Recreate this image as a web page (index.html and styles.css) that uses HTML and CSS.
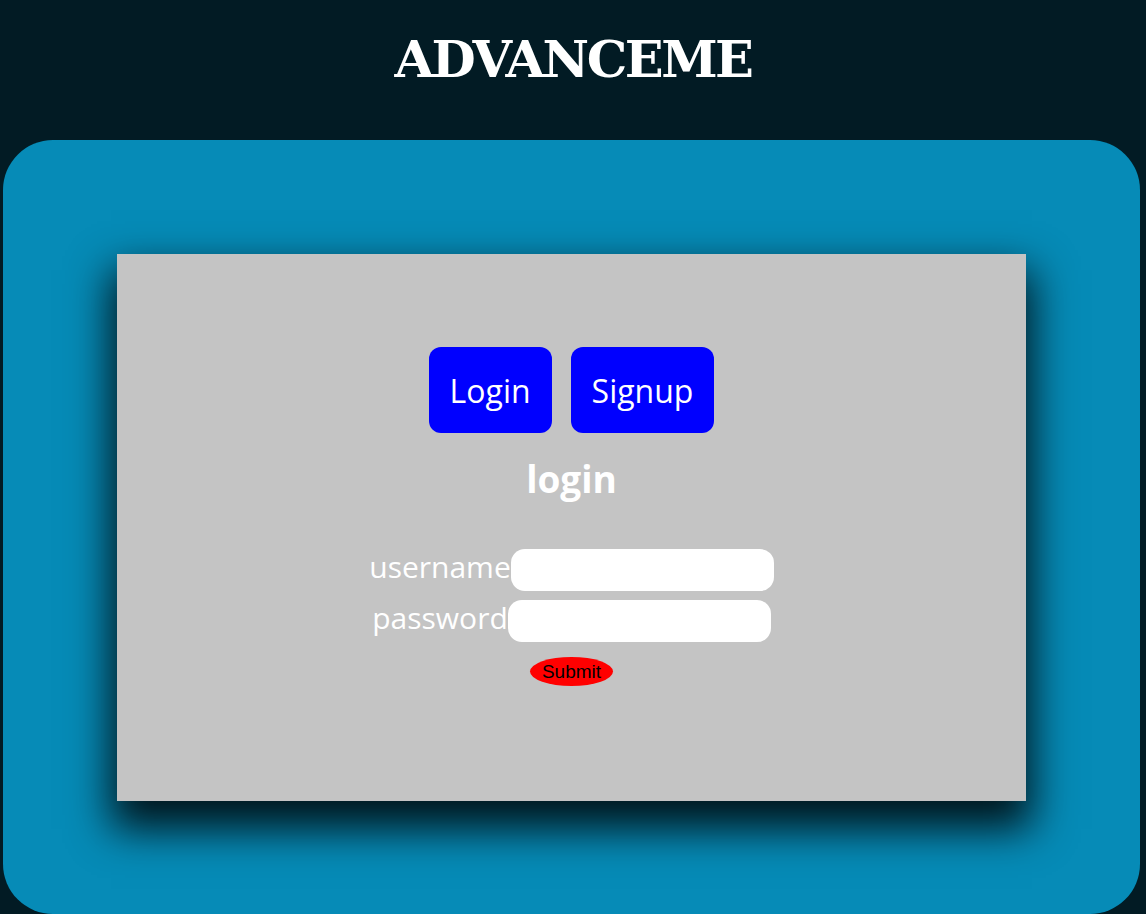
FILE: index.html
```html
<!DOCTYPE html>
<html>
<head>
<meta charset="utf-8">
<link rel="stylesheet" href="styles.css">
</head>
<body>
<header class="top">
  <h1 class="brand">ADVANCEME</h1>
</header>
<main class="panel">
  <section class="card">
    <div class="tabs">
      <button class="tab">Login</button>
      <button class="tab">Signup</button>
    </div>
    <h2 class="form-title">login</h2>
    <form class="form">
      <div class="row"><label class="label">username</label><input class="field" type="text"></div>
      <div class="row"><label class="label">password</label><input class="field" type="password"></div>
      <button class="submit" type="button">Submit</button>
    </form>
  </section>
</main>
</body>
</html>
```
FILE: styles.css
```css
html, body {
  margin: 0;
  padding: 0;
  background: #021b24;
  height: 914px;
  overflow: hidden;
}
body {
  font-family: "Open Sans", "Noto Sans", sans-serif;
}
.top {
  height: 140px;
  display: flex;
  justify-content: center;
}
.brand {
  margin: 27px 0 0;
  font-family: "DejaVu Serif", serif;
  font-weight: bold;
  font-size: 51px;
  line-height: 64px;
  color: #ffffff;
  letter-spacing: -2.5px;
}
.panel {
  margin-left: 3px;
  width: 1137px;
  height: 774px;
  box-sizing: border-box;
  padding: 114px;
  background: #068bb7;
  border-radius: 50px;
}
.card {
  height: 547px;
  background: #c4c4c4;
  box-shadow: 0 22px 40px 6px rgba(0, 0, 0, 0.85);
  display: flex;
  flex-direction: column;
  align-items: center;
  padding-top: 93px;
  box-sizing: border-box;
}
.tabs {
  display: flex;
  gap: 19px;
}
.tab {
  height: 86px;
  padding: 0 21px;
  background: #0000ff;
  color: #ffffff;
  border: none;
  border-radius: 12px;
  font-family: "Open Sans", "Noto Sans", sans-serif;
  font-size: 32px;
}
.form-title {
  margin: 23px 0 0;
  font-size: 37px;
  line-height: 46px;
  font-weight: bold;
  color: #ffffff;
}
.form {
  margin-top: 47px;
  display: flex;
  flex-direction: column;
  align-items: center;
  gap: 9px;
}
.row {
  display: flex;
  align-items: flex-start;
}
.label {
  font-size: 30px;
  color: #ffffff;
  line-height: 36px;
}
.field {
  width: 263px;
  height: 42px;
  box-sizing: border-box;
  border: none;
  border-radius: 14px;
  background: #ffffff;
}
.submit {
  margin-top: 6px;
  width: 83px;
  height: 29px;
  padding: 0;
  background: #ff0000;
  border: none;
  border-radius: 50%;
  font-family: "Liberation Sans", Arial, sans-serif;
  font-size: 19px;
  color: #000000;
}
```
